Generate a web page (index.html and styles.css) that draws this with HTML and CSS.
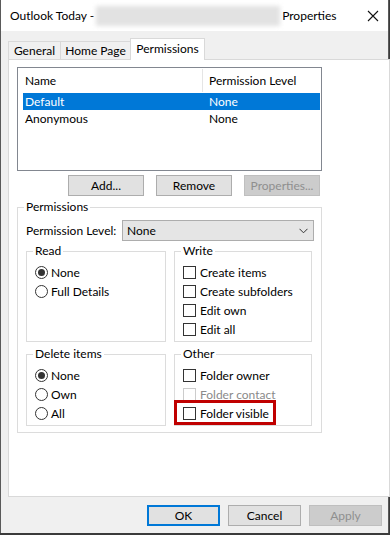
FILE: index.html
```html
<!doctype html>
<html lang="en">
  <head>
    <meta charset="UTF-8" />
    <meta name="viewport" content="width=device-width, initial-scale=1.0" />
    <title>Outlook Today Properties</title>
    <link rel="stylesheet" href="styles.css">
  </head>
  <body>
    <div class="window">
      <div class="titlebar">
        <span class="title">Outlook Today -<span class="redacted"></span>Properties</span>
        <svg class="close" width="12" height="12" viewBox="0 0 12 12">
          <path d="M1 1 L11 11 M11 1 L1 11" stroke="#111" stroke-width="1.1" fill="none" />
        </svg>
      </div>

      <div class="tabs">
        <div class="tab tab-general">General</div>
        <div class="tab tab-home">Home Page</div>
        <div class="tab tab-perm active">Permissions</div>
      </div>

      <div class="panel">
        <div class="list">
          <div class="list-head">
            <span class="col-name">Name</span>
            <span class="col-level">Permission Level</span>
          </div>
          <div class="list-row selected">
            <span class="col-name">Default</span>
            <span class="col-level">None</span>
          </div>
          <div class="list-row">
            <span class="col-name">Anonymous</span>
            <span class="col-level">None</span>
          </div>
        </div>

        <div class="list-buttons">
          <button class="btn">Add...</button>
          <button class="btn">Remove</button>
          <button class="btn" disabled>Properties...</button>
        </div>

        <fieldset class="group outer">
          <legend>Permissions</legend>
          <div class="level-row">
            <span class="level-label">Permission Level:</span>
            <div class="combo">
              <span>None</span>
              <svg class="chevron" width="9" height="6" viewBox="0 0 9 6">
                <path d="M0.5 0.8 L4.5 4.8 L8.5 0.8" stroke="#333" stroke-width="1" fill="none" />
              </svg>
            </div>
          </div>

          <div class="group-grid">
            <fieldset class="group">
              <legend>Read</legend>
              <div class="opt"><span class="radio checked"></span>None</div>
              <div class="opt"><span class="radio"></span>Full Details</div>
            </fieldset>
            <fieldset class="group">
              <legend>Write</legend>
              <div class="opt"><span class="check"></span>Create items</div>
              <div class="opt"><span class="check"></span>Create subfolders</div>
              <div class="opt"><span class="check"></span>Edit own</div>
              <div class="opt"><span class="check"></span>Edit all</div>
            </fieldset>
            <fieldset class="group">
              <legend>Delete items</legend>
              <div class="opt"><span class="radio checked"></span>None</div>
              <div class="opt"><span class="radio"></span>Own</div>
              <div class="opt"><span class="radio"></span>All</div>
            </fieldset>
            <fieldset class="group">
              <legend>Other</legend>
              <div class="opt"><span class="check"></span>Folder owner</div>
              <div class="opt disabled"><span class="check"></span>Folder contact</div>
              <div class="opt highlighted"><span class="check"></span>Folder visible</div>
            </fieldset>
          </div>
        </fieldset>
      </div>

      <div class="footer">
        <button class="btn default">OK</button>
        <button class="btn">Cancel</button>
        <button class="btn" disabled>Apply</button>
      </div>
    </div>
  </body>
</html>
```

FILE: styles.css
```css
body {
  margin: 0;
  background-color: #3b3b3b;
  font-family: Lato, "Noto Sans", sans-serif;
  font-size: 12px;
  color: #000;
}
.window {
  width: 387px;
  height: 533px;
  background-color: #f0f0f0;
  border-left: 1px solid #5a5a5a;
  border-right: 1px solid #5a5a5a;
}
.titlebar {
  height: 31px;
  background-color: #fff;
  display: flex;
  align-items: center;
  justify-content: space-between;
  padding: 0 9px 0 9px;
}
.title {
  display: flex;
  align-items: center;
  white-space: nowrap;
}
.redacted {
  display: inline-block;
  width: 184px;
  height: 20px;
  margin: 0 2px 0 2px;
  background-color: #e2e2e2;
  filter: blur(2px);
}
.close {
  margin-right: 0;
}
.tabs {
  display: flex;
  align-items: flex-end;
  margin-top: 7px;
  padding-left: 7px;
  height: 21px;
  position: relative;
  z-index: 1;
}
.tab {
  height: 18px;
  line-height: 18px;
  border: 1px solid #d9d9d9;
  border-bottom: none;
  background-color: #f0f0f0;
  text-align: center;
  box-sizing: border-box;
  margin-right: -1px;
}
.tab-general {
  width: 53px;
}
.tab-home {
  width: 71px;
}
.tab-perm {
  width: 75px;
}
.tab.active {
  height: 22px;
  line-height: 20px;
  background-color: #fff;
  margin-bottom: -1px;
}
.panel {
  margin-left: 7px;
  width: 372px;
  height: 436px;
  background-color: #fff;
  border: 1px solid #d9d9d9;
  padding: 7px 0 0 8px;
  box-sizing: content-box;
  height: 429px;
}
.list {
  width: 303px;
  height: 102px;
  border: 1px solid #828790;
  padding: 0 1px 0 5px;
  box-sizing: border-box;
  width: 305px;
  height: 104px;
}
.list-head,
.list-row {
  display: flex;
  align-items: center;
}
.list-head {
  height: 25px;
}
.list-row {
  height: 17px;
}
.col-name {
  width: 180px;
  padding-left: 2px;
  box-sizing: border-box;
}
.col-level {
  flex: 1;
  padding-left: 6px;
}
.list-head .col-name {
  border-right: 1px solid #e5e5e5;
  height: 23px;
  line-height: 23px;
}
.list-row.selected {
  background-color: #0078d7;
  color: #fff;
}
.list-buttons {
  width: 305px;
  display: flex;
  justify-content: flex-end;
  gap: 12px;
  margin-top: 4px;
  padding-right: 2px;
  box-sizing: border-box;
}
.list-buttons .btn {
  width: 76px;
  height: 21px;
}
.btn {
  font-family: inherit;
  font-size: 12px;
  color: #000;
  background-color: #e1e1e1;
  border: 1px solid #adadad;
  border-radius: 0;
  padding: 0;
}
.btn:disabled {
  background-color: #cccccc;
  border-color: #bfbfbf;
  color: #8f8f8f;
}
.btn.default {
  border: 2px solid #0078d7;
}
.group {
  margin: 0;
  border: 1px solid #dcdcdc;
  padding: 4px 8px 2px 8px;
  min-width: 0;
}
.group legend {
  padding: 0 2px;
  margin-left: -2px;
  line-height: 16px;
}
.outer {
  width: 305px;
  box-sizing: border-box;
  margin-top: 3px;
  padding: 5px 8px 6px 8px;
}
.level-row {
  display: flex;
  align-items: center;
  justify-content: space-between;
  height: 21px;
}
.combo {
  width: 192px;
  height: 21px;
  box-sizing: border-box;
  background-color: #e5e5e5;
  border: 1px solid #adadad;
  display: flex;
  align-items: center;
  justify-content: space-between;
  padding: 0 5px 0 4px;
  margin-right: -1px;
}
.group-grid {
  display: grid;
  grid-template-columns: 140px 138px;
  column-gap: 8px;
  row-gap: 4px;
  margin-top: 2px;
}
.group-grid .group {
  padding-bottom: 2px;
}
.opt {
  display: flex;
  align-items: center;
  height: 19px;
  white-space: nowrap;
}
.radio,
.check {
  width: 13px;
  height: 13px;
  box-sizing: border-box;
  border: 1px solid #333;
  background-color: #fff;
  margin-right: 3px;
  flex: none;
}
.radio {
  border-radius: 50%;
  display: flex;
  align-items: center;
  justify-content: center;
}
.radio.checked::after {
  content: "";
  width: 7px;
  height: 7px;
  border-radius: 50%;
  background-color: #333;
}
.check {
  margin-right: 4px;
}
.opt.disabled {
  color: #8a8a8a;
}
.opt.disabled .check {
  border-color: #cccccc;
}
.highlighted {
  position: relative;
}
.highlighted::after {
  content: "";
  position: absolute;
  left: -9px;
  top: -4px;
  width: 102px;
  height: 25px;
  box-sizing: border-box;
  border: 3px solid #c00000;
}
.footer {
  display: flex;
  justify-content: flex-end;
  gap: 8px;
  margin-top: 8px;
  padding-right: 6px;
}
.footer .btn {
  width: 73px;
  height: 21px;
}
```
